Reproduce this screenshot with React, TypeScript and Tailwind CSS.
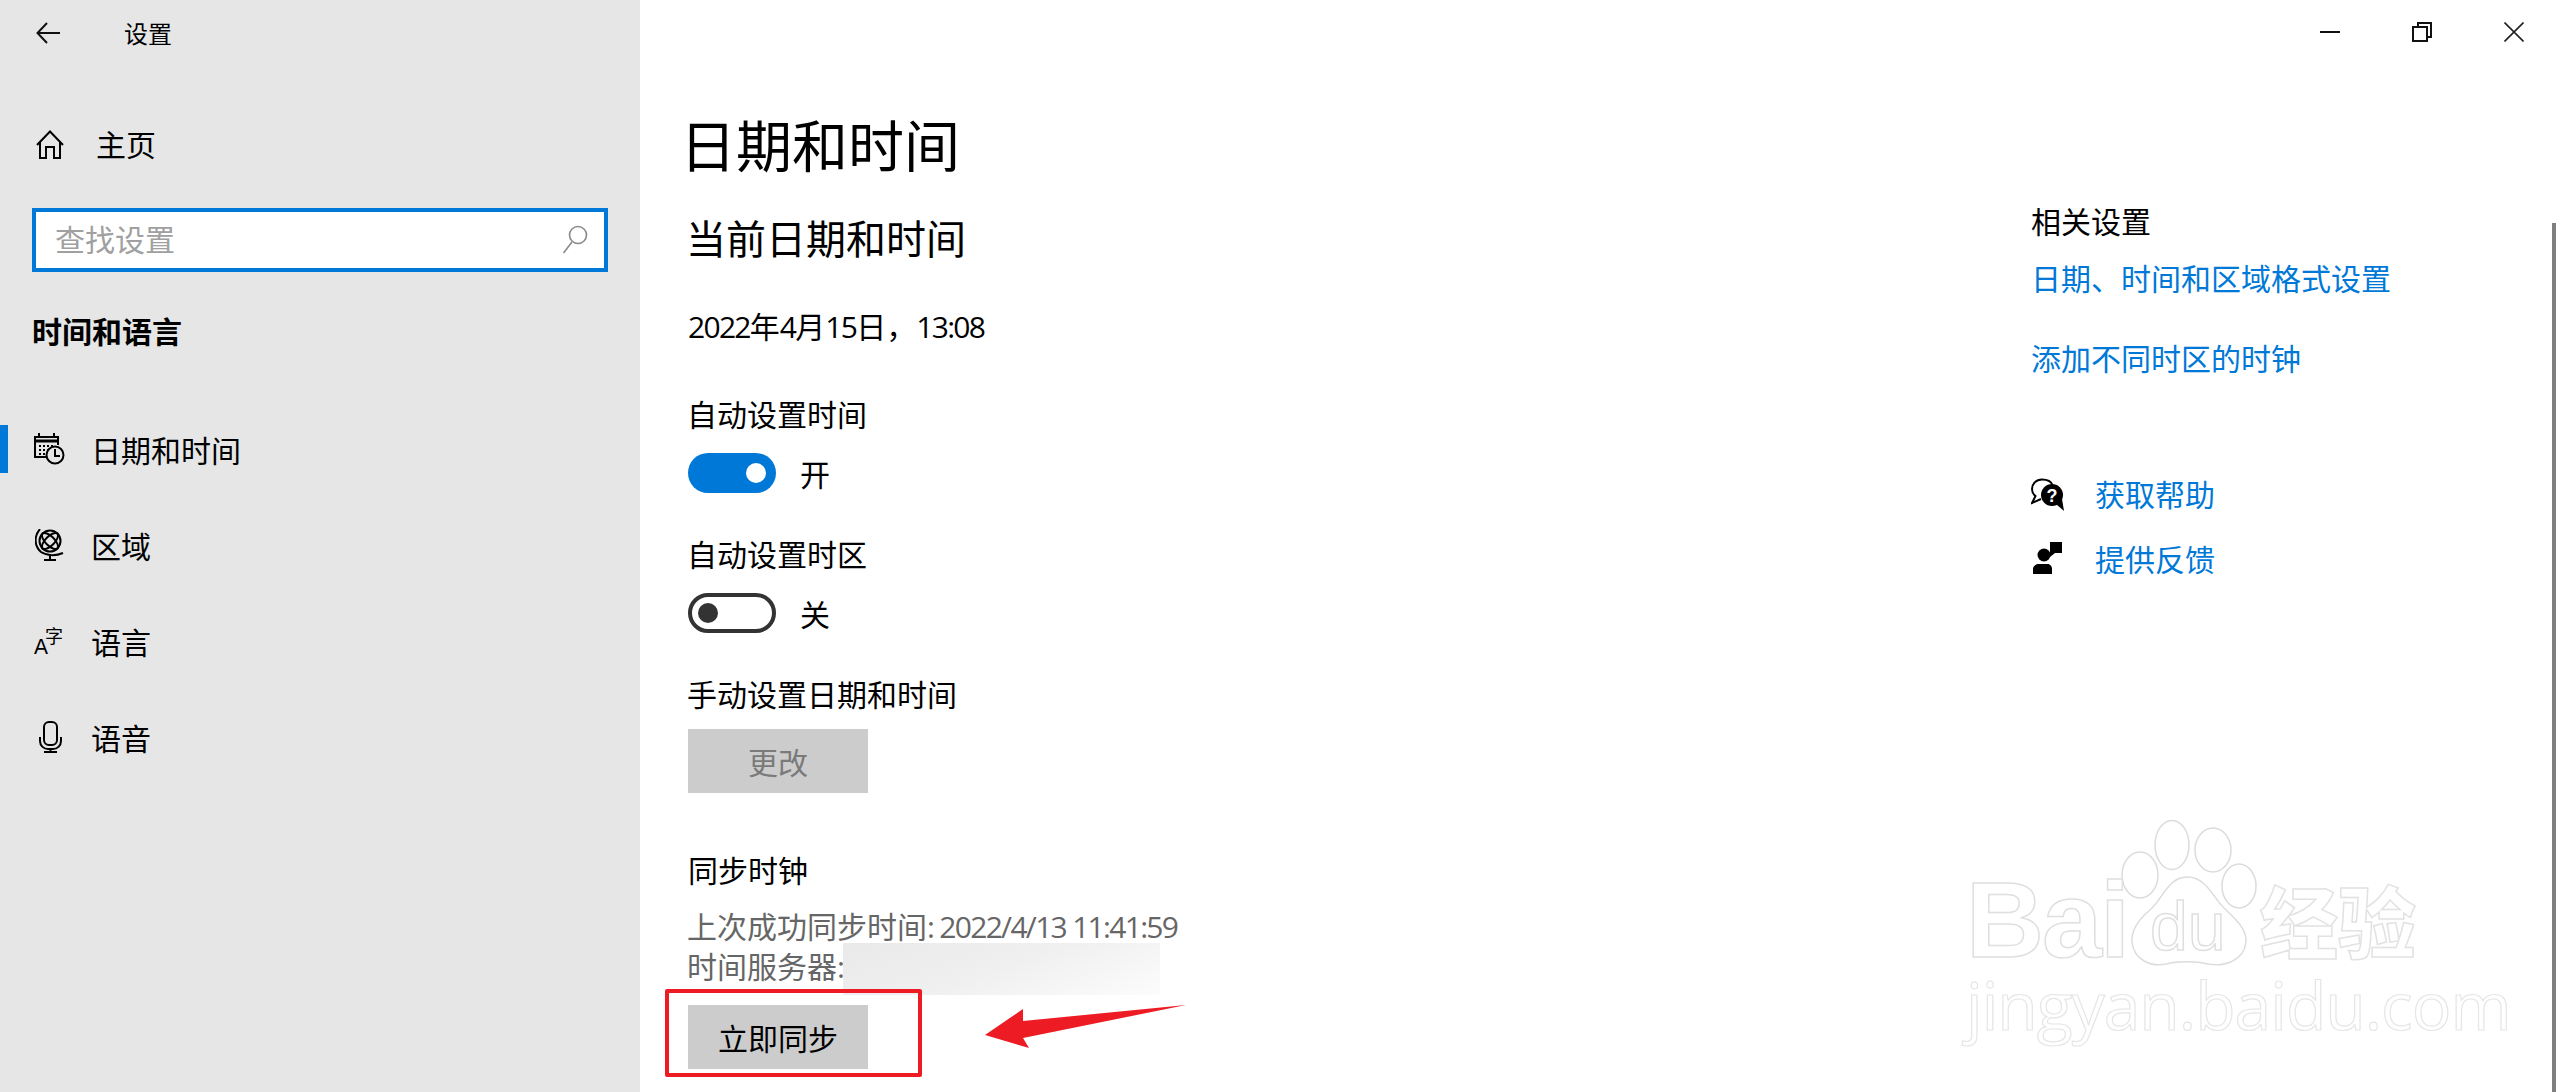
import React from "react";

const cjk = "font-['Noto_Sans_CJK_SC','Noto_Sans',sans-serif]";

function NavRow({ icon, label, active }: { icon: React.ReactNode; label: string; active?: boolean }) {
  return (
    <div className="flex h-[96px] items-center">
      <div className={active ? "h-[48px] w-[8px] bg-[#0078d7]" : "h-[48px] w-[8px]"} />
      <div className="ml-[26px] flex h-[40px] w-[32px] items-center justify-center">{icon}</div>
      <span className="ml-[25px] text-[30px] leading-[40px] text-black">{label}</span>
    </div>
  );
}

const CalendarIcon = () => (
  <svg width="32" height="34" viewBox="0 0 32 34" fill="none" stroke="#000" strokeWidth="2">
    <path d="M13 25H1V5H24V13" />
    <path d="M1 9H24" strokeWidth="3" />
    <path d="M5 1V6M20 1V6" />
    <path d="M5 14h2M9 14h2M13 14h2M17 14h2M5 18h2M9 18h2M13 18h2M5 22h2M9 22h2" />
    <circle cx="21" cy="23" r="8.5" fill="#e6e6e6" />
    <path d="M21 17V24H26" />
  </svg>
);

const GlobeIcon = () => (
  <svg width="30" height="32" viewBox="0 0 30 32" fill="none" stroke="#000" strokeWidth="2">
    <circle cx="15" cy="12" r="10.5" />
    <ellipse cx="15" cy="12" rx="10.5" ry="4.5" transform="rotate(45 15 12)" />
    <ellipse cx="15" cy="12" rx="10.5" ry="4.5" transform="rotate(-45 15 12)" />
    <path d="M5 0C-1 7 -1 17 6 23C12 27 21 27 28 24" />
    <path d="M15 26V31M9 31H21" />
  </svg>
);

const LangIcon = () => (
  <svg width="32" height="40" viewBox="0 0 32 40" className="overflow-visible">
    <text x="0" y="33" fontSize="22" fontFamily="'Liberation Sans',sans-serif" fill="#000" textLength="14" lengthAdjust="spacingAndGlyphs">A</text>
    <text x="11" y="22" fontSize="18" fontFamily="'Noto Sans CJK SC',sans-serif" fill="#000">字</text>
  </svg>
);

const MicIcon = () => (
  <svg width="24" height="32" viewBox="0 0 24 32" fill="none" stroke="#000" strokeWidth="2">
    <rect x="6" y="1" width="13" height="23" rx="5" />
    <path d="M2 16V20C2 25 6 28 10 28H15C19 28 23 25 23 20V16" />
    <path d="M12.5 28V31M6 31H19" />
  </svg>
);

function Toggle({ on }: { on: boolean }) {
  return on ? (
    <div className="flex h-[40px] w-[88px] items-center justify-end rounded-full bg-[#0078d7] pr-[10px]">
      <div className="h-[20px] w-[20px] rounded-full bg-white" />
    </div>
  ) : (
    <div className="flex h-[40px] w-[88px] items-center rounded-full border-4 border-[#333333] pl-[6px]">
      <div className="h-[20px] w-[20px] rounded-full bg-[#333333]" />
    </div>
  );
}

const Line = ({ className, children }: { className?: string; children: React.ReactNode }) => (
  <div className={`h-[40px] whitespace-nowrap text-[30px] leading-[36px] ${className ?? "text-black"}`}>{children}</div>
);

const Digits = ({ children }: { children: React.ReactNode }) => (
  <span className="font-['Open_Sans',sans-serif] tracking-[-1.7px]">{children}</span>
);

export default function App() {
  return (
    <div className={`relative flex h-[1092px] w-[2560px] overflow-hidden bg-white ${cjk}`}>
      {/* sidebar */}
      <aside className="h-full w-[640px] shrink-0 bg-[#e6e6e6]">
        <div className="flex h-[66px] items-center pl-[36px]">
          <svg width="24" height="22" viewBox="0 0 24 22" fill="none" stroke="#111" strokeWidth="2">
            <path d="M24 11H1.5M11 1L1.5 11L11 21" />
          </svg>
          <span className="ml-[64px] text-[24px] leading-[30px] text-black">设置</span>
        </div>
        <div className="mt-[31px] flex h-[96px] items-center pl-[35px]">
          <svg width="30" height="30" viewBox="0 0 30 30" fill="none" stroke="#000" strokeWidth="2">
            <path d="M2 15L15 1.5L28 15" />
            <path d="M5 12V28H11V17H19V28H25V12" />
          </svg>
          <span className="ml-[31px] h-[40px] text-[30px] leading-[36px] text-black">主页</span>
        </div>
        <div className="ml-[32px] mt-[15px] flex h-[64px] w-[576px] items-center justify-between border-4 border-[#0078d7] bg-white pl-[19px] pr-[16px]">
          <span className="h-[40px] text-[30px] leading-[36px] text-[#a0a0a0]">查找设置</span>
          <svg width="26" height="30" viewBox="0 0 26 30" fill="none" stroke="#8a8a8a" strokeWidth="1.6">
            <circle cx="16" cy="10" r="8.5" />
            <path d="M10 17L1.5 28" />
          </svg>
        </div>
        <div className="ml-[32px] mt-[40px] h-[40px] text-[30px] font-bold leading-[36px] text-black">时间和语言</div>
        <div className="mt-[49px]">
          <NavRow active icon={<CalendarIcon />} label="日期和时间" />
          <NavRow icon={<GlobeIcon />} label="区域" />
          <NavRow icon={<LangIcon />} label="语言" />
          <NavRow icon={<MicIcon />} label="语音" />
        </div>
      </aside>

      {/* main */}
      <main className="flex h-full min-w-0 flex-1 flex-col">
        <div className="flex h-[66px] shrink-0 items-start justify-end">
          <div className="flex h-[44px] items-center pr-[36px] pt-[20px]">
            <svg width="20" height="4" viewBox="0 0 20 4" stroke="#111" strokeWidth="2"><path d="M0 2H20" /></svg>
            <svg className="ml-[72px]" width="20" height="20" viewBox="0 0 20 20" fill="none" stroke="#111" strokeWidth="2">
              <rect x="1" y="5" width="14" height="14" />
              <path d="M6 5V1H19V15H15" />
            </svg>
            <svg className="ml-[72px]" width="20" height="20" viewBox="0 0 20 20" fill="none" stroke="#222" strokeWidth="1.6">
              <path d="M0.5 0.5L19.5 19.5M19.5 0.5L0.5 19.5" />
            </svg>
          </div>
        </div>
        <div className="flex min-h-0 flex-1">
          <section className="w-[1391px] shrink-0 pl-[48px]">
            <h1 className="-ml-[8px] mt-[40px] h-[76px] text-[56px] font-normal leading-[74px] text-black">日期和时间</h1>
            <h2 className="-ml-[2px] mt-[32px] h-[50px] text-[40px] font-normal leading-[47px] text-black">当前日期和时间</h2>
            <Line className="mt-[43px] text-black"><Digits>2022</Digits>年<Digits>4</Digits>月<Digits>15</Digits>日，<Digits>13:08</Digits></Line>
            <Line className="-ml-[1px] mt-[48px] text-black">自动设置时间</Line>
            <div className="mt-[18px] flex items-center">
              <Toggle on />
              <span className="ml-[24px] text-[30px] leading-[40px] text-black">开</span>
            </div>
            <Line className="-ml-[1px] mt-[42px] text-black">自动设置时区</Line>
            <div className="mt-[18px] flex items-center">
              <Toggle on={false} />
              <span className="ml-[24px] text-[30px] leading-[40px] text-black">关</span>
            </div>
            <Line className="-ml-[1px] mt-[42px] text-black">手动设置日期和时间</Line>
            <div className="mt-[14px] flex h-[64px] w-[180px] items-center justify-center bg-[#cccccc] text-[30px] text-[#7a7a7a]">更改</div>
            <Line className="mt-[58px] text-black">同步时钟</Line>
            <Line className="-ml-[1px] mt-[16px] text-[#666666]">上次成功同步时间<Digits>: 2022/4/13 11:41:59</Digits></Line>
            <Line className="-ml-[1px] text-[#666666]">时间服务器<Digits>:</Digits></Line>
            <div className="mt-[18px] flex h-[64px] w-[180px] items-center justify-center bg-[#cccccc] text-[30px] text-black">立即同步</div>
          </section>
          <section className="flex-1">
            <Line className="mt-[136px] text-black">相关设置</Line>
            <Line className="mt-[17px] text-[#0078d7]">日期、时间和区域格式设置</Line>
            <Line className="mt-[40px] text-[#0078d7]">添加不同时区的时钟</Line>
            <div className="mt-[96px] flex items-center">
              <svg width="34" height="34" viewBox="0 0 34 34">
                <path d="M11 1.5C5 1.5 1 6 1 11C1 14 2.5 16.5 4.5 18L1 25L10 21" fill="none" stroke="#000" strokeWidth="2" />
                <path d="M11 1.5C16 1.5 20 3 21.5 7" fill="none" stroke="#000" strokeWidth="2" />
                <circle cx="21" cy="17" r="11" fill="#000" />
                <path d="M25 26L33 33L31 21Z" fill="#000" />
                <text x="21" y="24" textAnchor="middle" fontSize="18" fontWeight="700" fill="#fff" fontFamily="'Liberation Sans',sans-serif">?</text>
              </svg>
              <span className="ml-[30px] h-[40px] text-[30px] leading-[36px] text-[#0078d7]">获取帮助</span>
            </div>
            <div className="mt-[23px] flex items-center">
              <svg width="34" height="34" viewBox="0 0 34 34" fill="#000">
                <circle cx="13" cy="14" r="6.5" />
                <path d="M2 33V28C2 25 5 23 8 23H16C19 23 21 25 21 28V33Z" />
                <path d="M19 1H31V12H24L19 16Z" />
              </svg>
              <span className="ml-[30px] text-[30px] leading-[40px] text-[#0078d7]">提供反馈</span>
            </div>
          </section>
        </div>
      </main>

      {/* scrollbar */}
      <div className="absolute bottom-0 left-[2552px] top-[223px] w-[4px] bg-[#7f7f7f]" />

      {/* blurred-out server name */}
      <div className="absolute left-[843px] top-[943px] h-[52px] w-[317px] bg-[linear-gradient(160deg,#e9e9e9_0%,#f0f0f0_50%,#fcfcfc_100%)]" />

      {/* annotation */}
      <div className="absolute left-[665px] top-[989px] h-[88px] w-[257px] rounded-[2px] border-4 border-[#ed1c24]" />
      <svg className="absolute left-[980px] top-[1000px]" width="210" height="52" viewBox="0 0 210 52">
        <path d="M5 35L43 9L43 21L206 5L43 38L49 48Z" fill="#ed1c24" />
      </svg>

      {/* watermark */}
      <div className="absolute left-[1966px] top-[818px] h-[220px] w-[460px] text-white">
        <svg className="absolute left-0 top-0" width="460" height="150" viewBox="0 0 460 150" fill="#fff" stroke="#dcdcdc" strokeWidth="1.5">
          <ellipse cx="206" cy="27" rx="17" ry="24.5" />
          <ellipse cx="247" cy="32" rx="18" ry="22" />
          <ellipse cx="174" cy="57" rx="18" ry="23" />
          <ellipse cx="273" cy="68" rx="17" ry="22" />
          <path d="M221 59C202 59 196 82 184 92C172 102 165 112 166 124C168 143 186 149 200 146C212 143 230 143 242 146C258 149 278 143 280 124C281 110 268 100 258 90C246 78 240 59 221 59Z" />
        </svg>
        <span className="absolute left-0 top-[54px] font-['Liberation_Sans',sans-serif] text-[108px] font-bold leading-[96px] tracking-[-2px] [-webkit-text-stroke:1.5px_#dfdfdf]">Bai</span>
        <span className="absolute left-[184px] top-[68px] font-['Liberation_Sans',sans-serif] text-[68px] leading-[80px] [-webkit-text-stroke:1.5px_#dfdfdf]">du</span>
        <span className="absolute left-[294px] top-[56px] text-[78px] font-black leading-[90px] [-webkit-text-stroke:1.5px_#e2e2e2]">经验</span>
        <span className="absolute left-0 top-[150px] font-['Open_Sans',sans-serif] text-[66px] leading-[72px] tracking-[-1px] [-webkit-text-stroke:1.2px_#e6e6e6]">jingyan.baidu.com</span>
      </div>
    </div>
  );
}
